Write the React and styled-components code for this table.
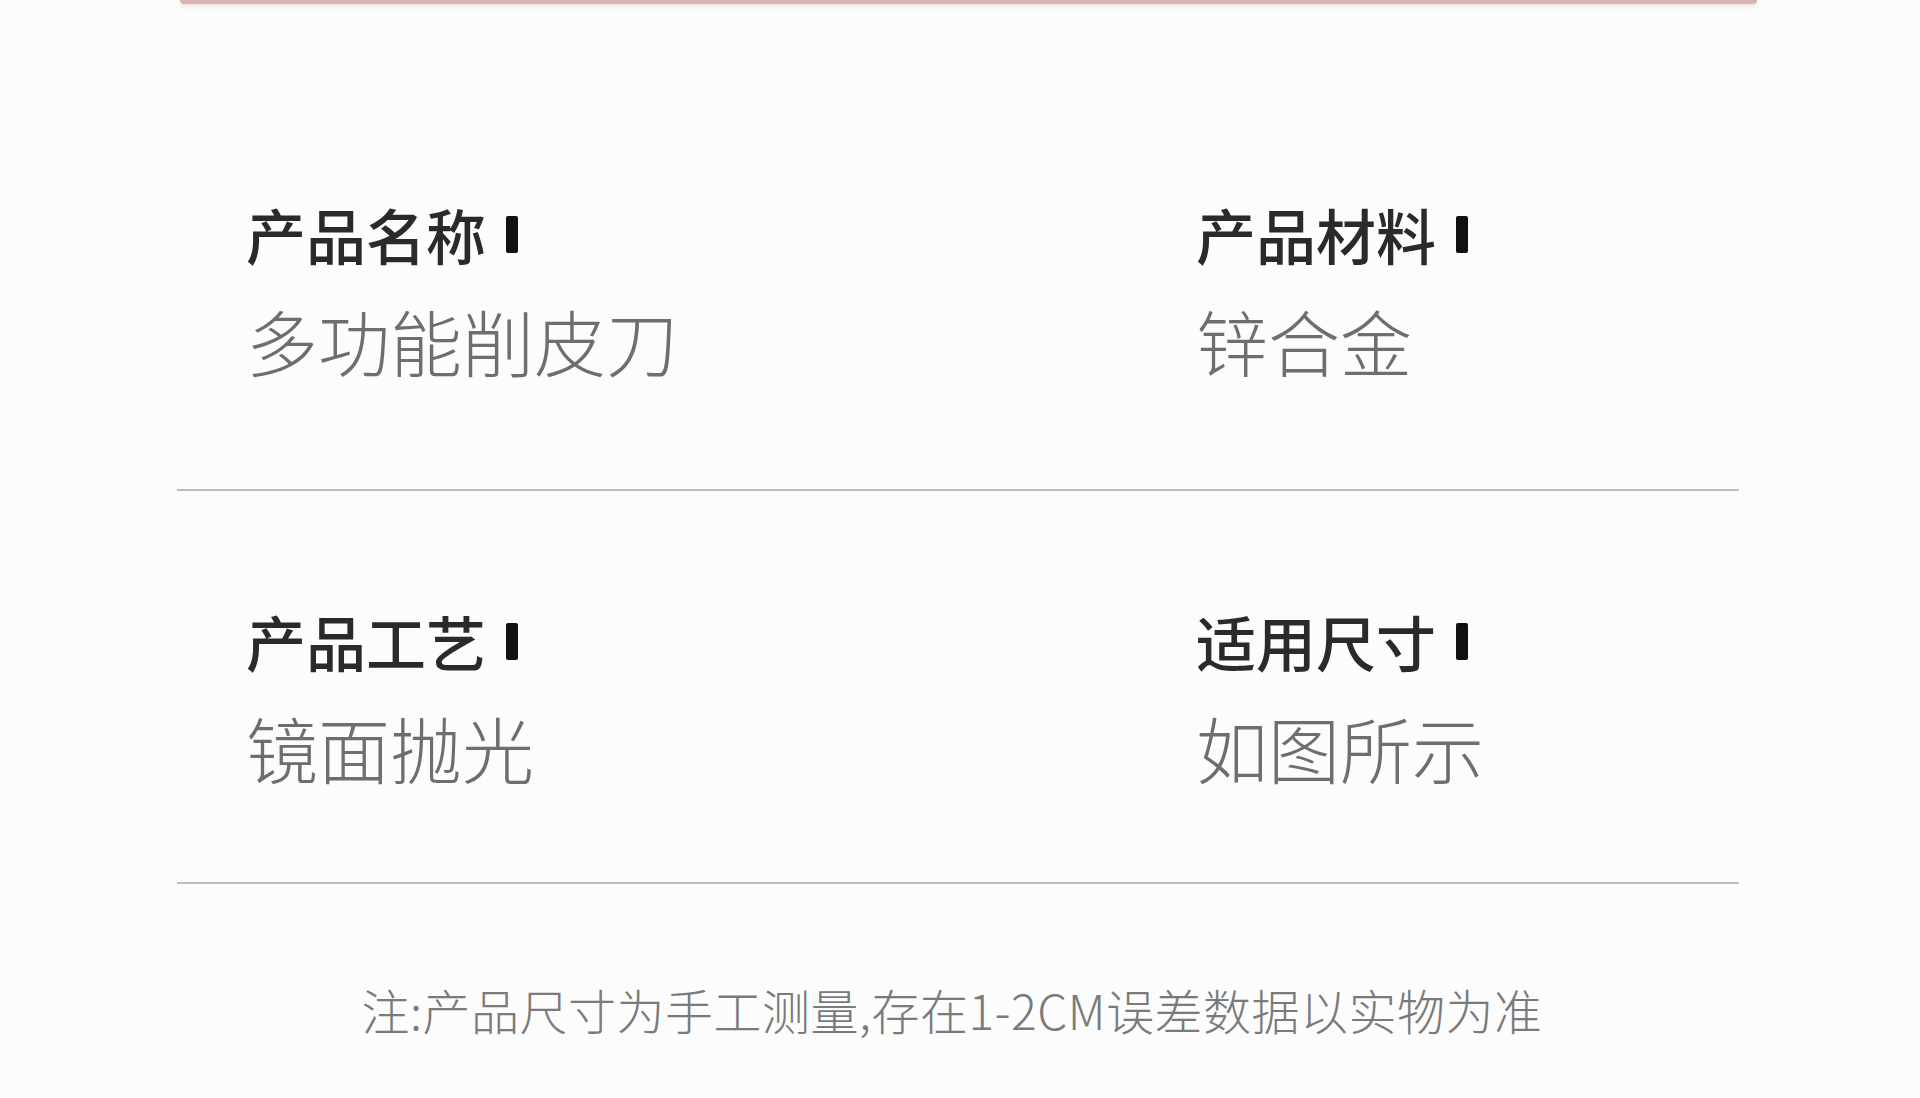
import React from 'react';
import styled, { createGlobalStyle } from 'styled-components';

const GlobalStyle = createGlobalStyle`
    html, body {
        margin: 0;
        padding: 0;
        background: #fcfcfc;
    }
    body {
        font-family: "Noto Sans CJK SC", "Noto Sans", sans-serif;
        height: 1098px;
        overflow: hidden;
    }
`;

const specs = [
    [
        { label: '产品名称', value: '多功能削皮刀' },
        { label: '产品材料', value: '锌合金' },
    ],
    [
        { label: '产品工艺', value: '镜面抛光' },
        { label: '适用尺寸', value: '如图所示' },
    ],
];

const App = () => {
    return (
        <>
            <GlobalStyle />
            <Page>
                <TopEdge />
                <Table>
                    {specs.map((row, i) => (
                        <Row key={i} first={i === 0}>
                            {row.map(cell => (
                                <Cell key={cell.label}>
                                    <Label>
                                        {cell.label}
                                        <Marker />
                                    </Label>
                                    <Value>{cell.value}</Value>
                                </Cell>
                            ))}
                        </Row>
                    ))}
                </Table>
                <Note>注:产品尺寸为手工测量,存在1-2CM误差数据以实物为准</Note>
            </Page>
        </>
    );
};

export default App;

const Page = styled.div`
    width: 1920px;
    height: 1098px;
    display: flex;
    flex-direction: column;
    background: #fcfcfc;
`;

const TopEdge = styled.div`
    margin: 0 163px 0 180px;
    height: 4px;
    background: #d9b4ad;
    border-radius: 0 0 4px 4px;
    box-shadow: 0 2px 4px rgba(205, 160, 150, 0.35);
`;

const Table = styled.div`
    margin: 0 181px 0 177px;
    display: flex;
    flex-direction: column;
`;

const Row = styled.div`
    display: grid;
    grid-template-columns: 950px 1fr;
    padding: ${p => (p.first ? '200px 0 113px 69px' : '120px 0 99px 69px')};
    border-bottom: 2px solid #bdbdbd;
`;

const Cell = styled.div`
    display: flex;
    flex-direction: column;
    gap: 40px;
`;

const Label = styled.div`
    display: flex;
    align-items: center;
    font-size: 60px;
    line-height: 1;
    font-weight: 500;
    color: #2a2a2a;
`;

const Marker = styled.span`
    width: 12px;
    height: 37px;
    margin-left: 20px;
    background: #111;
    border-radius: 2px;
`;

const Value = styled.div`
    font-size: 72px;
    line-height: 1;
    font-weight: 300;
    color: #6e6e6e;
`;

const Note = styled.div`
    margin-top: 101px;
    margin-left: -16px;
    text-align: center;
    font-size: 48px;
    line-height: 1;
    font-weight: 300;
    letter-spacing: 0.5px;
    color: #7a7a7a;
`;
